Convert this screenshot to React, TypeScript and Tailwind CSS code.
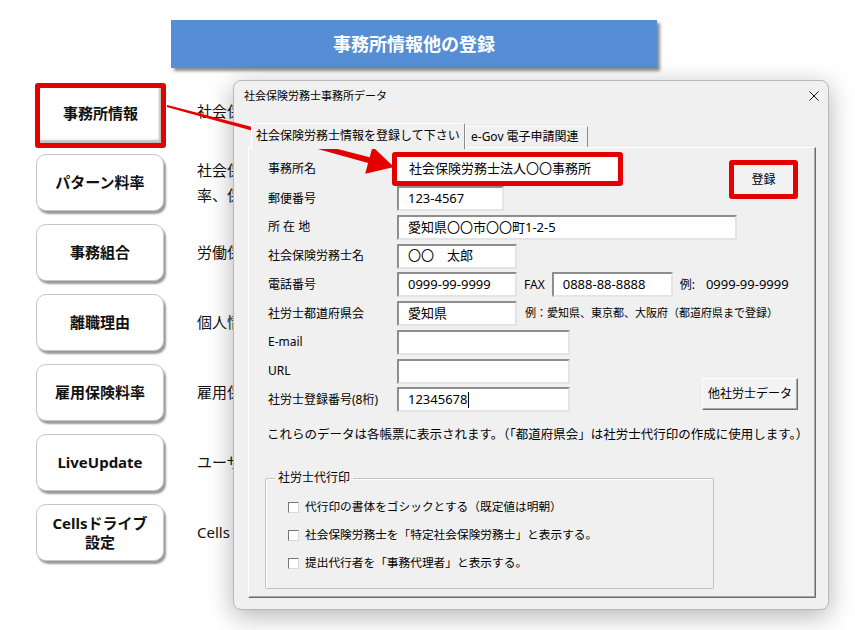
import React from 'react';

type SideItem = {
  label: string[];
  lines: string[];
};

const sideItems: SideItem[] = [
  { label: ['パターン料率'], lines: ['社会保険・労働保険のパターン料', '率、保険料率を登録します。'] },
  { label: ['事務組合'], lines: ['労働保険事務組合の情報を登録します。'] },
  { label: ['離職理由'], lines: ['個人情報で使用する離職理由を登録します。'] },
  { label: ['雇用保険料率'], lines: ['雇用保険料率を登録します。'] },
  { label: ['LiveUpdate'], lines: ['ユーザー登録とLiveUpdateを行います。'] },
  { label: ['Cellsドライブ', '設定'], lines: ['Cellsドライブの設定を行います。'] },
];

const checks = [
  '代行印の書体をゴシックとする（既定値は明朝）',
  '社会保険労務士を「特定社会保険労務士」と表示する。',
  '提出代行者を「事務代理者」と表示する。',
];

const Field = ({ w, value, caret }: { w: string; value?: string; caret?: boolean }) => (
  <div
    className={`${w} h-[25px] shrink-0 bg-white border-2 border-t-[#8e8e8e] border-l-[#8e8e8e] border-r-[#e4e4e4] border-b-[#e4e4e4] flex items-center pl-[9px] text-[13px] whitespace-nowrap`}
  >
    {value}
    {caret && <span className="inline-block w-[1px] h-[16px] bg-black" />}
  </div>
);

const Label = ({ children }: { children: React.ReactNode }) => (
  <div className="w-[129px] shrink-0 text-[12px] whitespace-nowrap">{children}</div>
);

const Dialog = () => (
  <div className="absolute left-[233px] top-[80px] w-[596px] h-[530px] rounded-[8px] border border-[#b8b8b8] bg-[#f0f0f0] shadow-[0_6px_26px_rgba(0,0,0,0.3)] text-black">
    <div className="h-[30px] flex items-center justify-between pl-[10px] pr-[9px]">
      <span className="text-[11px]">社会保険労務士事務所データ</span>
      <svg width="10" height="10" viewBox="0 0 10 10">
        <path d="M0.5 0.5 L9.5 9.5 M9.5 0.5 L0.5 9.5" stroke="#1a1a1a" strokeWidth="1" />
      </svg>
    </div>

    <div className="pl-[14px] mt-[12px]">
      {/* tabs */}
      <div className="flex items-end h-[24px] pl-[3px]">
        <div className="relative z-10 -mb-[2px] w-[214px] h-[26px] bg-[#f0f0f0] border-t border-l border-white border-r border-r-[#8a8a8a] rounded-t-[2px] flex items-center pl-[4px] pb-[2px] text-[12px] whitespace-nowrap">
          社会保険労務士情報を登録して下さい
        </div>
        <div className="w-[123px] h-[21px] border-t border-l border-white border-r border-r-[#8a8a8a] flex items-center pl-[5px] text-[12px] whitespace-nowrap">
          e-Gov 電子申請関連
        </div>
      </div>

      {/* panel */}
      <div className="w-[568px] h-[451px] border border-t-white border-l-white border-r-[#6e6e6e] border-b-[#6e6e6e] shadow-[inset_-1px_-1px_0_#a8a8a8] pt-[4px] pl-[19px]">
        <div className="flex flex-col">
          <div className="flex items-center h-[34px]">
            <Label>事務所名</Label>
            <div className="-ml-[5px] w-[231px] h-[34px] shrink-0 border-[5px] border-[#e50000] rounded-[3px] bg-white flex items-center pl-[12px] text-[13px] whitespace-nowrap">
              社会保険労務士法人〇〇事務所
            </div>
            <div className="self-start mt-[8px] ml-[106px] w-[69px] h-[39px] shrink-0 border-[5px] border-[#e50000] rounded-[3px] bg-[#f2f2f2] flex items-center justify-center text-[12px]">
              登録
            </div>
          </div>

          <div className="flex items-center h-[25px]">
            <Label>郵便番号</Label>
            <Field w="w-[107px]" value="123-4567" />
          </div>

          <div className="flex items-center h-[25px] mt-[3.75px]">
            <Label>所 在 地</Label>
            <Field w="w-[340px]" value="愛知県〇〇市〇〇町1-2-5" />
          </div>

          <div className="flex items-center h-[25px] mt-[3.75px]">
            <Label>社会保険労務士名</Label>
            <Field w="w-[120px]" value="〇〇　太郎" />
          </div>

          <div className="flex items-center h-[25px] mt-[3.75px]">
            <Label>電話番号</Label>
            <Field w="w-[120px]" value="0999-99-9999" />
            <span className="ml-[7px] text-[12px]">FAX</span>
            <div className="ml-[7px]">
              <Field w="w-[121px]" value="0888-88-8888" />
            </div>
            <span className="ml-[7px] text-[12px]">例:</span>
            <span className="ml-[11px] text-[13px]">0999-99-9999</span>
          </div>

          <div className="flex items-center h-[25px] mt-[3.75px]">
            <Label>社労士都道府県会</Label>
            <Field w="w-[120px]" value="愛知県" />
            <span className="ml-[8px] text-[11px] whitespace-nowrap">例：愛知県、東京都、大阪府（都道府県まで登録）</span>
          </div>

          <div className="flex items-center h-[25px] mt-[3.75px]">
            <Label>E-mail</Label>
            <Field w="w-[173px]" />
          </div>

          <div className="flex items-center h-[25px] mt-[3.75px]">
            <Label>URL</Label>
            <Field w="w-[173px]" />
          </div>

          <div className="flex items-center h-[25px] mt-[3.75px]">
            <Label>社労士登録番号(8桁)</Label>
            <Field w="w-[173px]" value="12345678" caret />
            <div className="self-start -mt-[9px] ml-[132px] w-[96px] h-[32px] shrink-0 bg-[#f3f3f3] border border-t-white border-l-white border-r-[#6e6e6e] border-b-[#6e6e6e] shadow-[inset_-1px_-1px_0_#a8a8a8] flex items-center justify-center text-[12px] whitespace-nowrap">
              他社労士データ
            </div>
          </div>
        </div>

        <p className="mt-[14px] -ml-[1px] text-[12.5px] leading-[18px] whitespace-nowrap">
          これらのデータは各帳票に表示されます。（「都道府県会」は社労士代行印の作成に使用します。）
        </p>

        <div className="relative mt-[34px] -ml-[3px] w-[449px] h-[111px] border border-[#c2c2c2] shadow-[inset_1px_1px_0_#ffffff] rounded-[2px]">
          <span className="absolute -top-[9px] left-[9px] px-[3px] bg-[#f0f0f0] text-[12px] leading-[16px]">社労士代行印</span>
          <div className="pt-[14px] pl-[22px] flex flex-col">
            {checks.map((t) => (
              <div key={t} className="h-[28px] flex items-center">
                <span className="w-[11px] h-[11px] shrink-0 bg-white border border-t-[#767676] border-l-[#767676] border-r-[#d8d8d8] border-b-[#d8d8d8]" />
                <span className="ml-[6px] text-[11.7px] whitespace-nowrap">{t}</span>
              </div>
            ))}
          </div>
        </div>
      </div>
    </div>
  </div>
);

const Arrow = () => (
  <svg className="absolute left-0 top-0 pointer-events-none" width="855" height="630" viewBox="0 0 855 630">
    <polygon
      points="167.3,105 369.7,157.3 372.6,146.7 394,167 365.2,173.7 368.1,163.1 166.7,107"
      fill="#e50000"
    />
  </svg>
);

export default function App() {
  return (
    <div className="relative w-[855px] h-[630px] overflow-hidden bg-white font-['Noto_Sans','Noto_Sans_CJK_JP',sans-serif] text-[#111]">
      <div className="ml-[171px] mt-[20px] w-[486px] h-[48px] bg-[#558ed5] shadow-[3px_3px_3px_rgba(0,0,0,0.45)] flex items-center justify-center text-white font-bold text-[18px]">
        事務所情報他の登録
      </div>

      <div className="mt-[15px] flex flex-col">
        <div className="flex items-start h-[65px]">
          <div className="ml-[35px] w-[131px] h-[65px] shrink-0 border-[5px] border-[#e50000] rounded-[3px] bg-white shadow-[inset_-2px_-3px_2px_rgba(0,0,0,0.25)] flex items-center justify-center pb-[4px] font-bold text-[15px]">
            事務所情報
          </div>
          {/* description runs under the dialog; clip it at the dialog's left edge */}
          <div className="ml-[31px] mt-[17px] w-[36px] overflow-hidden text-[15px] leading-[22px] whitespace-nowrap">
            社会保険労務士事務所の情報を登録します。
          </div>
        </div>

        <div className="mt-[6px] flex flex-col gap-[13px]">
          {sideItems.map((it) => (
            <div key={it.label.join('')} className="flex items-center h-[57px]">
              <div className="ml-[36px] w-[128px] h-[57px] shrink-0 bg-white border border-[#c6c6c6] rounded-[10px] shadow-[2px_3px_2px_rgba(0,0,0,0.4)] flex flex-col items-center justify-center font-bold text-[15px] leading-[19px]">
                {it.label.map((l) => (
                  <span key={l}>{l}</span>
                ))}
              </div>
              <div className="ml-[33px] w-[36px] overflow-hidden text-[15px] leading-[25px] whitespace-nowrap">
                {it.lines.map((l) => (
                  <div key={l}>{l}</div>
                ))}
              </div>
            </div>
          ))}
        </div>
      </div>

      <Dialog />
      <Arrow />
    </div>
  );
}
